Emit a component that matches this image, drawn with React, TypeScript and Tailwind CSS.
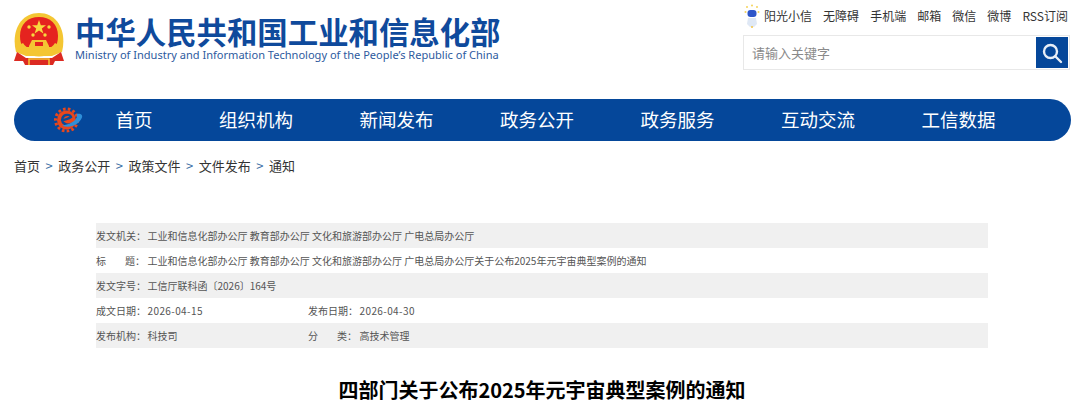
const cjk = "font-['Noto_Sans_CJK_SC','Liberation_Sans',sans-serif]";

const navItems = ["首页", "组织机构", "新闻发布", "政务公开", "政务服务", "互动交流", "工信数据"];
const topLinks = ["无障碍", "手机端", "邮箱", "微信", "微博", "RSS订阅"];
const crumbs = ["首页", "政务公开", "政策文件", "文件发布", "通知"];

function Emblem() {
  return (
    <svg width="50" height="54" viewBox="0 0 50 54" className="shrink-0">
      <path d="M2 40 C-3 20 6 1 25 1 C44 1 53 20 48 40 L38 44 H12 Z" fill="#f4c633" />
      <path d="M6 24 C6 12 14 5 25 5 C36 5 44 12 44 24 C44 29 43 32 41 35 H9 C7 32 6 29 6 24 Z" fill="#e5231f" />
      <path d="M3 40 L0 49 L9 49 L11 53 H39 L41 49 L50 49 L47 40 L38 46 H12 Z" fill="#dc2a22" />
      <path d="M15 53 V47 H35 V53" fill="none" stroke="#f4c633" strokeWidth="1.5" />
      <path d="M4 34 C12 48 38 48 46 34 L41 31 C34 42 16 42 9 31 Z" fill="#f4c633" />
      <polygon points="25,8 26.8,13.2 32,13.2 27.8,16.4 29.4,21.5 25,18.4 20.6,21.5 22.2,16.4 18,13.2 23.2,13.2" fill="#f8d93f" />
      <circle cx="15" cy="15" r="1.7" fill="#f8d93f" />
      <circle cx="35" cy="15" r="1.7" fill="#f8d93f" />
      <circle cx="19" cy="23" r="1.7" fill="#f8d93f" />
      <circle cx="31" cy="23" r="1.7" fill="#f8d93f" />
      <path d="M15 34 L18 28 H32 L35 34 V37 H15 Z" fill="#f4c633" />
      <rect x="21" y="30" width="8" height="4" fill="#e5231f" />
    </svg>
  );
}

function SunshineIcon() {
  return (
    <svg width="16" height="24" viewBox="0 0 16 24" className="shrink-0">
      <circle cx="3" cy="3" r="1" fill="#f5d35a" />
      <circle cx="8" cy="1.5" r="1" fill="#f5d35a" />
      <circle cx="13" cy="3" r="1" fill="#f5d35a" />
      <circle cx="1.5" cy="8" r="1" fill="#f5d35a" />
      <circle cx="14.5" cy="8" r="1" fill="#f5d35a" />
      <path d="M4 14 H12 L13 20 L10 23 H6 L3 20 Z" fill="#dfe8f5" />
      <rect x="3.5" y="6" width="9" height="7" rx="3" fill="#2e55c8" />
      <circle cx="8" cy="23" r="1" fill="#f5c542" />
    </svg>
  );
}

function NavLogo() {
  return (
    <svg width="30" height="30" viewBox="0 0 30 30" className="shrink-0">
      <circle cx="12.5" cy="15" r="11" fill="none" stroke="#e8471c" strokeWidth="3" strokeDasharray="2.6 2.2" />
      <circle cx="12.5" cy="15" r="9.5" fill="#e8471c" />
      <path d="M8 15 C10 15 15 13.5 17 12 C16 9 10 9 8.5 13 C7 18 12 21 18 19" fill="none" stroke="#0a4a96" strokeWidth="2.4" strokeLinecap="round" />
      <path d="M8 20.5 C15 24 25 20 28 12.5 C29 9.5 26 8 22.5 9 C25 13 19 19 8 20.5 Z" fill="#2f8fd8" />
    </svg>
  );
}

function Row({ shaded, children }: { shaded?: boolean; children: React.ReactNode }) {
  return (
    <div className={`flex h-[25px] items-center text-[10px] text-[#555] ${shaded ? "bg-[#f0f0f0]" : ""}`}>
      {children}
    </div>
  );
}

function Cell({ label, value, spread, date }: { label: string; value: string; spread?: boolean; date?: boolean }) {
  return (
    <div className="flex">
      <span className="flex w-[51.5px] shrink-0">
        {spread ? (
          <>
            <span className="w-[29px]">{label[0]}</span>
            <span>{label[1]}：</span>
          </>
        ) : (
          `${label}：`
        )}
      </span>
      <span className={date ? "tracking-[0.4px]" : ""}>{value}</span>
    </div>
  );
}

export default function App() {
  return (
    <div className={`h-[417px] w-[1080px] overflow-hidden bg-white ${cjk}`}>
      <header className="flex h-[99px] justify-between pl-[14px] pr-[10px]">
        <div className="flex pt-[12px]">
          <Emblem />
          <div className="ml-[11px] flex flex-col">
            <h1 className="mt-[3px] h-[32px] text-[30.4px] leading-[32px] font-bold whitespace-nowrap text-[#0f4a9c]">
              中华人民共和国工业和信息化部
            </h1>
            <p className="mt-[1px] font-['Noto_Sans',sans-serif] text-[11.06px] leading-[14px] whitespace-nowrap text-[#2d5a9e]">
              Ministry of Industry and Information Technology of the People’s Republic of China
            </p>
          </div>
        </div>
        <div className="flex w-[327px] flex-col">
          <div className="mt-[4px] flex h-[24px] items-center justify-between pr-[2px] pl-[1px] text-[12px] text-[#333]">
            <span className="flex items-center gap-[4px]">
              <SunshineIcon />
              阳光小信
            </span>
            {topLinks.map((link) => (
              <span key={link}>{link}</span>
            ))}
          </div>
          <div className="mt-[7px] flex h-[35px] items-center justify-between border border-[#e8e8e8] pr-[1px] pl-[8px]">
            <span className="text-[13px] text-[#8a8a8a]">请输入关键字</span>
            <div className="flex h-[31px] w-[32px] items-center justify-center bg-[#05479a]">
              <svg width="22" height="22" viewBox="0 0 22 22" fill="none" stroke="#e8eef7" strokeWidth="2.4">
                <circle cx="9.5" cy="9.5" r="6.5" />
                <path d="M14.5 14.5 L20 20" strokeLinecap="round" />
              </svg>
            </div>
          </div>
        </div>
      </header>

      <nav className="mx-[14px] flex h-[42px] w-[1057px] items-center gap-[66.5px] rounded-full bg-[#05479a] pl-[40px] text-[18.5px] text-white">
        <span className="mr-[-35px]">
          <NavLogo />
        </span>
        {navItems.map((item) => (
          <span key={item}>{item}</span>
        ))}
      </nav>

      <div className="mt-[15px] ml-[14px] flex h-[20px] items-center gap-[5.5px] text-[13px] text-[#333]">
        {crumbs.map((crumb, i) => (
          <span key={crumb} className="flex items-center gap-[5.5px]">
            {i > 0 && <span className="text-[#3a6ea5]">&gt;</span>}
            {crumb}
          </span>
        ))}
      </div>

      <section className="mx-[96px] mt-[47px] w-[892px]">
        <Row shaded>
          <Cell label="发文机关" value="工业和信息化部办公厅 教育部办公厅 文化和旅游部办公厅 广电总局办公厅" />
        </Row>
        <Row>
          <Cell label="标题" spread value="工业和信息化部办公厅 教育部办公厅 文化和旅游部办公厅 广电总局办公厅关于公布2025年元宇宙典型案例的通知" />
        </Row>
        <Row shaded>
          <Cell label="发文字号" value="工信厅联科函〔2026〕164号" />
        </Row>
        <Row>
          <div className="w-[212px]">
            <Cell label="成文日期" date value="2026-04-15" />
          </div>
          <Cell label="发布日期" date value="2026-04-30" />
        </Row>
        <Row shaded>
          <div className="w-[212px]">
            <Cell label="发布机构" value="科技司" />
          </div>
          <Cell label="分类" spread value="高技术管理" />
        </Row>
      </section>

      <h2 className="mt-[28px] w-[1084px] text-center text-[20px] leading-[28px] font-bold text-black">
        四部门关于公布2025年元宇宙典型案例的通知
      </h2>
    </div>
  );
}
